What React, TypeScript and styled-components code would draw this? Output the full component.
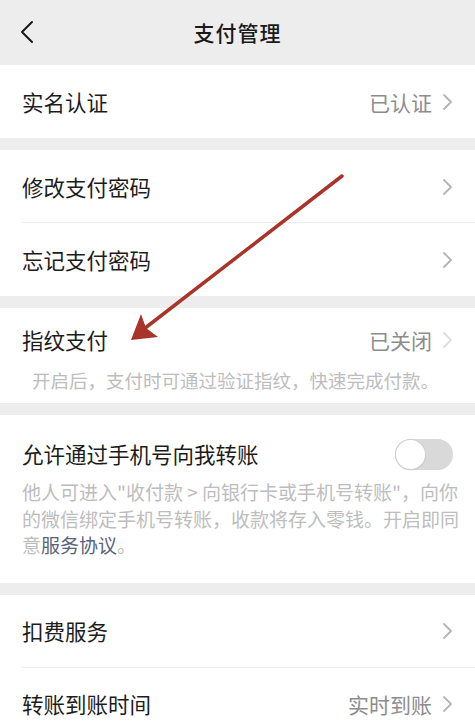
import React from 'react';
import styled, { createGlobalStyle } from 'styled-components';

const GlobalStyle = createGlobalStyle`
  html, body {
    margin: 0;
    padding: 0;
    background: #ededed;
  }
  body {
    font-family: "Noto Sans CJK SC", "Noto Sans", sans-serif;
    -webkit-font-smoothing: antialiased;
  }
`;

const Page = styled.div`
  position: relative;
  width: 475px;
  height: 728px;
  overflow: hidden;
  background: #ededed;
  display: flex;
  flex-direction: column;
  gap: 12px;
`;

const Header = styled.header`
  position: relative;
  height: 64px;
  flex-shrink: 0;
  display: flex;
  align-items: center;
  justify-content: center;
  margin-bottom: -11px;
`;

const BackButton = styled.div`
  position: absolute;
  left: 16px;
  top: 18px;
  width: 22px;
  height: 28px;
  display: flex;
  align-items: center;
  justify-content: center;
`;

const Title = styled.h1`
  margin: 0;
  font-size: 21px;
  font-weight: 500;
  color: #1a1a1a;
  letter-spacing: 1px;
`;

const Section = styled.section`
  background: #fff;
  flex-shrink: 0;
  display: flex;
  flex-direction: column;
`;

const Row = styled.div<{ $divider?: boolean }>`
  position: relative;
  height: 73px;
  padding: 0 22px;
  display: flex;
  align-items: center;
  justify-content: space-between;
  ${(p) =>
    p.$divider &&
    `
    &::after {
      content: "";
      position: absolute;
      left: 22px;
      right: 0;
      bottom: 0;
      height: 1px;
      background: #ececec;
    }
  `}
`;

const Label = styled.span`
  font-size: 21.5px;
  color: #1c1c1c;
  line-height: 28px;
`;

const Trail = styled.div`
  display: flex;
  align-items: center;
  gap: 10px;
`;

const Value = styled.span`
  font-size: 21px;
  color: #8c8c8c;
  line-height: 28px;
`;

const Block = styled.div<{ $top: number; $bottom: number }>`
  padding: ${(p) => p.$top}px 22px ${(p) => p.$bottom}px;
  display: flex;
  flex-direction: column;
`;

const HeadLine = styled.div`
  display: flex;
  align-items: center;
  justify-content: space-between;
  height: 28px;
`;

const Note = styled.p<{ $size: number; $indent?: number; $gap: number; $lh: number }>`
  margin: ${(p) => p.$gap}px 0 0 ${(p) => p.$indent ?? 0}px;
  font-size: ${(p) => p.$size}px;
  line-height: ${(p) => p.$lh}px;
  color: #bdbdbd;
  white-space: nowrap;
`;

const Link = styled.span`
  color: #58627c;
`;

const Toggle = styled.div`
  width: 58px;
  height: 31px;
  border-radius: 16px;
  background: #d9d9d9;
  box-sizing: border-box;
  padding: 1px;
  display: flex;
  align-items: center;
`;

const Knob = styled.div`
  width: 29px;
  height: 29px;
  border-radius: 50%;
  background: #fff;
  box-shadow: 0 0 0 1px #cfcfcf, 0 1px 2px rgba(0, 0, 0, 0.15);
`;

const Overlay = styled.svg`
  position: absolute;
  left: 0;
  top: 0;
  pointer-events: none;
`;

const Chevron = ({ light }: { light?: boolean }) => (
  <svg width="11" height="18" viewBox="0 0 11 18">
    <path
      d="M2 2 L9 9 L2 16"
      fill="none"
      stroke={light ? '#dedede' : '#b5b5b5'}
      strokeWidth="1.8"
      strokeLinecap="round"
      strokeLinejoin="round"
    />
  </svg>
);

export default function App() {
  return (
    <>
      <GlobalStyle />
      <Page>
        <Header>
          <BackButton>
            <svg width="14" height="24" viewBox="0 0 14 24">
              <path
                d="M12 2 L2 12 L12 22"
                fill="none"
                stroke="#1a1a1a"
                strokeWidth="2"
                strokeLinecap="round"
                strokeLinejoin="round"
              />
            </svg>
          </BackButton>
          <Title>支付管理</Title>
        </Header>

        <Section>
          <Row>
            <Label>实名认证</Label>
            <Trail>
              <Value>已认证</Value>
              <Chevron />
            </Trail>
          </Row>
        </Section>

        <Section>
          <Row $divider>
            <Label>修改支付密码</Label>
            <Chevron />
          </Row>
          <Row>
            <Label>忘记支付密码</Label>
            <Chevron />
          </Row>
        </Section>

        <Section>
          <Block $top={18} $bottom={10}>
            <HeadLine>
              <Label>指纹支付</Label>
              <Trail>
                <Value>已关闭</Value>
                <Chevron light />
              </Trail>
            </HeadLine>
            <Note $size={18.5} $indent={10} $gap={13} $lh={26}>
              开启后，支付时可通过验证指纹，快速完成付款。
            </Note>
          </Block>
        </Section>

        <Section>
          <Block $top={25} $bottom={24}>
            <HeadLine>
              <Label>允许通过手机号向我转账</Label>
              <Toggle>
                <Knob />
              </Toggle>
            </HeadLine>
            <Note $size={19} $gap={11} $lh={26.5}>
              他人可进入"收付款 &gt; 向银行卡或手机号转账"，向你
              <br />
              的微信绑定手机号转账，收款将存入零钱。开启即同
              <br />
              意<Link>服务协议</Link>。
            </Note>
          </Block>
        </Section>

        <Section>
          <Row $divider>
            <Label>扣费服务</Label>
            <Chevron />
          </Row>
          <Row>
            <Label>转账到账时间</Label>
            <Trail>
              <Value>实时到账</Value>
              <Chevron />
            </Trail>
          </Row>
        </Section>

        <Overlay width="475" height="728" viewBox="0 0 475 728">
          <line
            x1="342"
            y1="176"
            x2="140"
            y2="332"
            stroke="#a8342a"
            strokeWidth="3.5"
            strokeLinecap="round"
          />
          <polygon points="131,340 141,314 146,328 158,337" fill="#a8342a" />
        </Overlay>
      </Page>
    </>
  );
}
